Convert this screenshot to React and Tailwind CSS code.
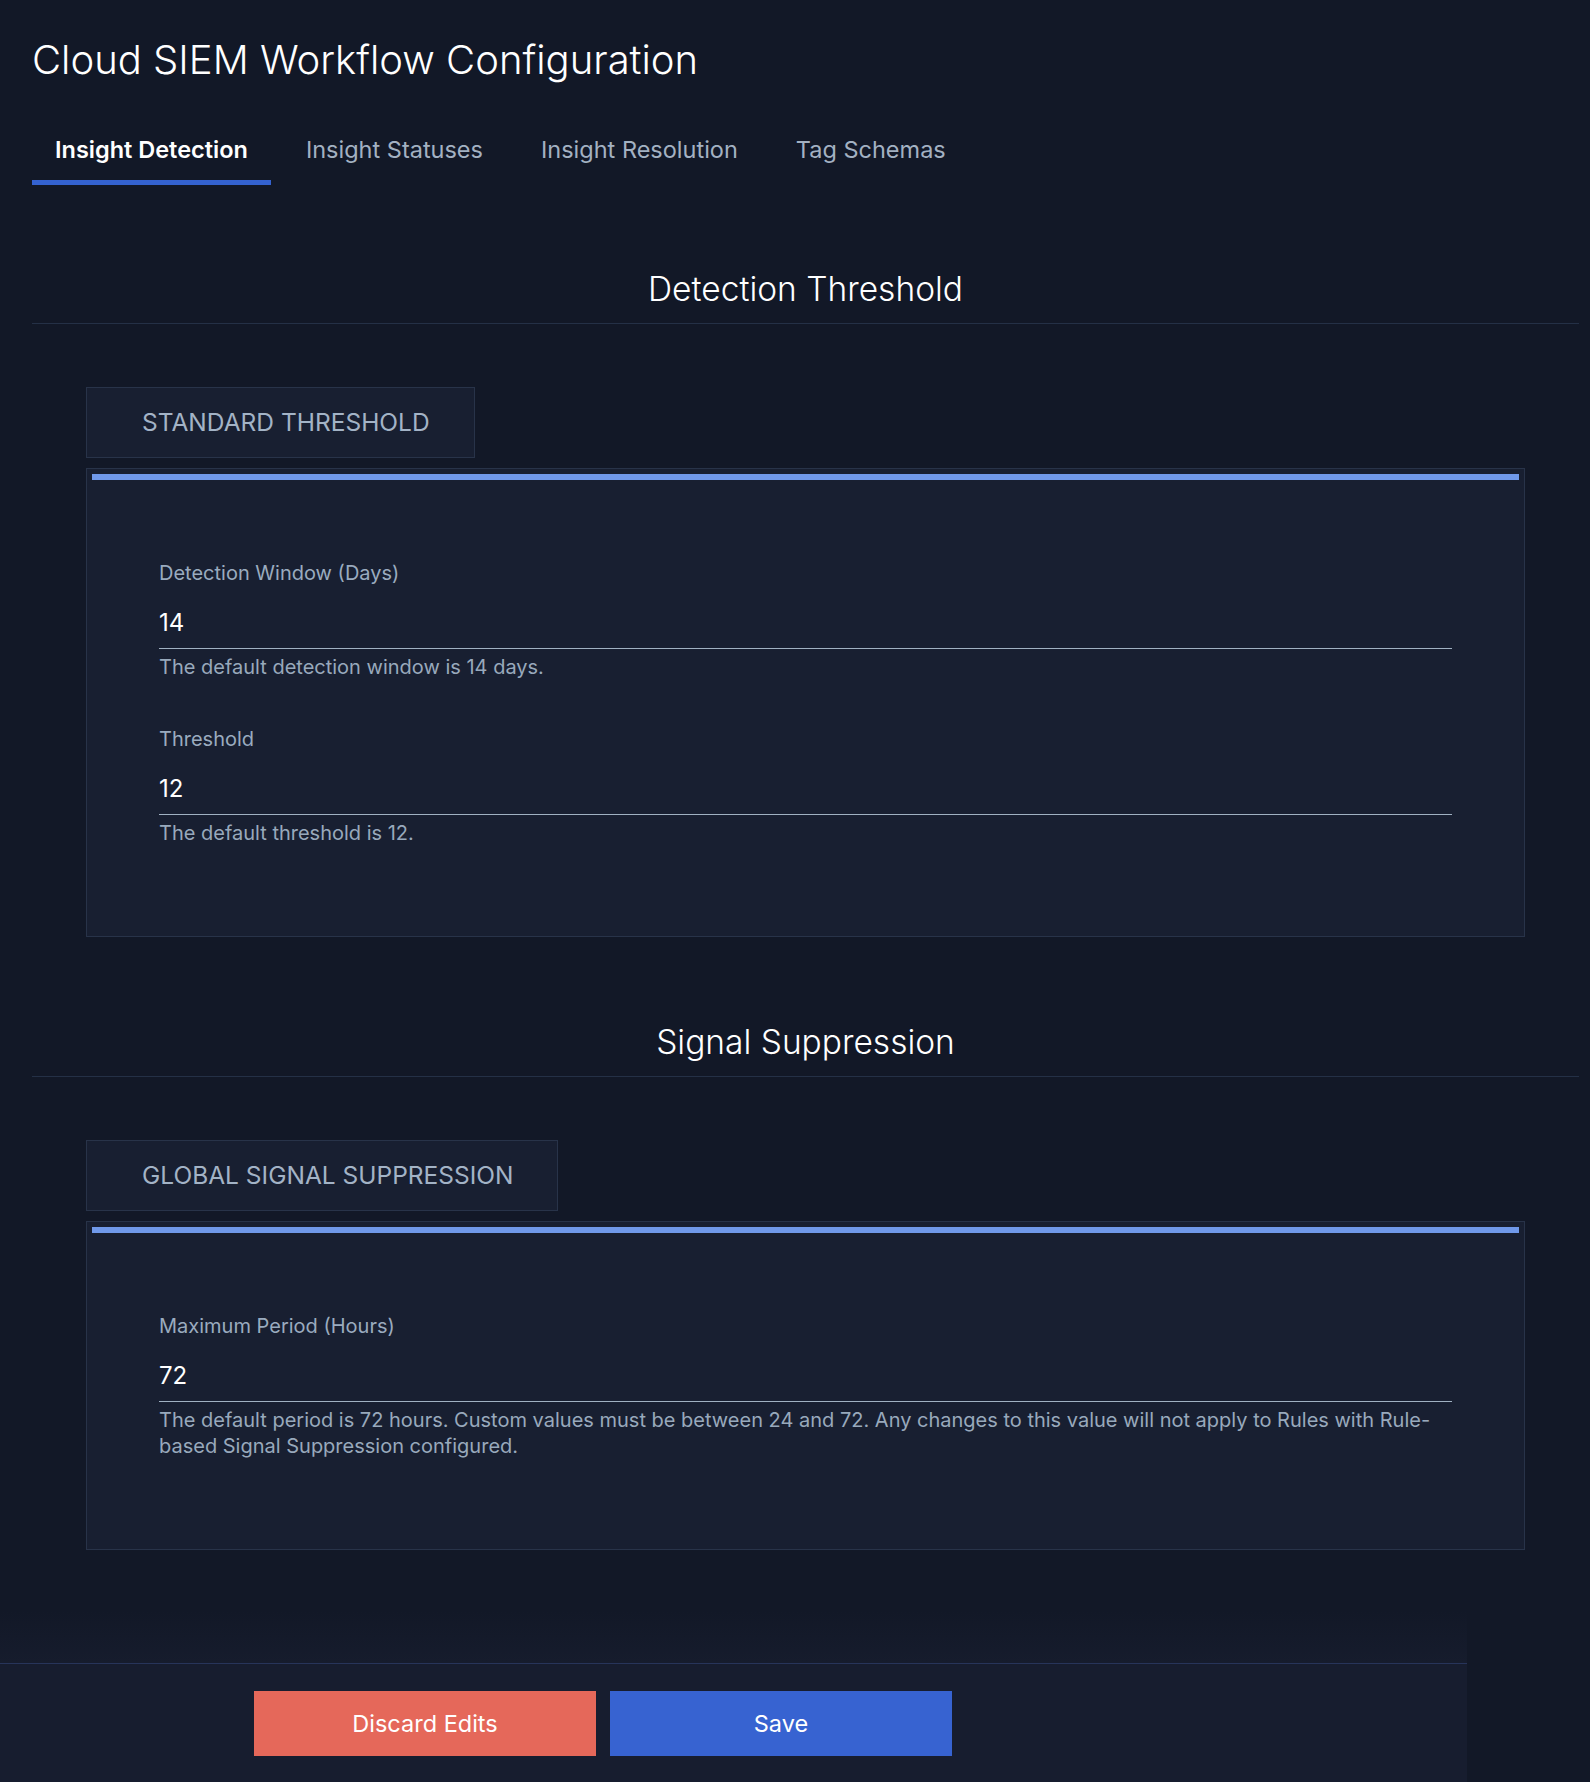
export default function App() {
  const tabs = [
    "Insight Detection",
    "Insight Statuses",
    "Insight Resolution",
    "Tag Schemas",
  ];

  return (
    <div className="min-h-screen bg-[#121827] font-['Inter',sans-serif]">
      <div className="pl-8 pr-[11px] pt-[36px]">
        {/* HEADER */}
        <h1 className="text-[40px] leading-[48px] font-light text-white">
          Cloud SIEM Workflow Configuration
        </h1>

        {/* TABS */}
        <nav className="mt-[52px] flex gap-[12px]">
          {tabs.map((tab, i) => (
            <div
              key={tab}
              className={
                i === 0
                  ? "px-[23px] pb-[16px] border-b-[5px] border-[#3462d0] text-[23.5px] leading-[28px] font-semibold text-white"
                  : "px-[23px] pb-[16px] border-b-[5px] border-transparent text-[23.5px] leading-[28px] text-[#a3b1c2]"
              }
            >
              {tab}
            </div>
          ))}
        </nav>

        {/* DETECTION THRESHOLD */}
        <section className="mt-[84px]">
          <h2 className="text-[33.5px] leading-[40px] font-light text-white text-center pb-[14px] border-b border-[#243046]">
            Detection Threshold
          </h2>

          <div className="mx-[54px] mt-[63px]">
            <div className="inline-flex items-center h-[71px] pl-[55px] pr-[44px] bg-[#181f31] border border-[#283349] text-[24.5px] text-[#a3b3c6] uppercase">
              Standard Threshold
            </div>

            <div className="mt-[10px] bg-[#181f31] border border-[#283349] p-[5px]">
              <div className="h-[6px] bg-[#7099ea]" />
              <div className="px-[67px] pt-[79px] pb-[85px]">
                <Field
                  label="Detection Window (Days)"
                  value="14"
                  help="The default detection window is 14 days."
                />
                <div className="mt-[45px]">
                  <Field
                    label="Threshold"
                    value="12"
                    help="The default threshold is 12."
                  />
                </div>
              </div>
            </div>
          </div>
        </section>

        {/* SIGNAL SUPPRESSION */}
        <section className="mt-[85px]">
          <h2 className="text-[33.5px] leading-[40px] font-light text-white text-center pb-[14px] border-b border-[#243046]">
            Signal Suppression
          </h2>

          <div className="mx-[54px] mt-[63px]">
            <div className="inline-flex items-center h-[71px] pl-[55px] pr-[44px] bg-[#181f31] border border-[#283349] text-[24.5px] text-[#a3b3c6] uppercase">
              Global Signal Suppression
            </div>

            <div className="mt-[10px] bg-[#181f31] border border-[#283349] p-[5px]">
              <div className="h-[6px] bg-[#7099ea]" />
              <div className="px-[67px] pt-[79px] pb-[85px]">
                <Field
                  label="Maximum Period (Hours)"
                  value="72"
                  help="The default period is 72 hours. Custom values must be between 24 and 72. Any changes to this value will not apply to Rules with Rule-based Signal Suppression configured."
                />
              </div>
            </div>
          </div>
        </section>
      </div>

      {/* FOOTER */}
      <div className="mt-[61px] w-[1467px]">
        <div className="h-[52px] bg-gradient-to-b from-[#121827] to-[#161c2d]" />
        <footer className="border-t border-[#27345a] bg-[#171d2f] pt-[27px] pb-[27px] pl-[254px] flex gap-[14px]">
          <button className="w-[342px] h-[65px] bg-[#e5685a] text-white text-[23.5px]">
            Discard Edits
          </button>
          <button className="w-[342px] h-[65px] bg-[#3763d1] text-white text-[23.5px]">
            Save
          </button>
        </footer>
      </div>
    </div>
  );
}

function Field({ label, value, help }) {
  return (
    <div>
      <div className="text-[20px] leading-[28px] text-[#9aabbf]">{label}</div>
      <div className="mt-[20px] pb-[9px] border-b border-[#a0b1c2] text-[24px] leading-[32px] text-white">
        {value}
      </div>
      <p className="mt-[5px] text-[20px] leading-[26px] text-[#98a9bc]">
        {help}
      </p>
    </div>
  );
}
